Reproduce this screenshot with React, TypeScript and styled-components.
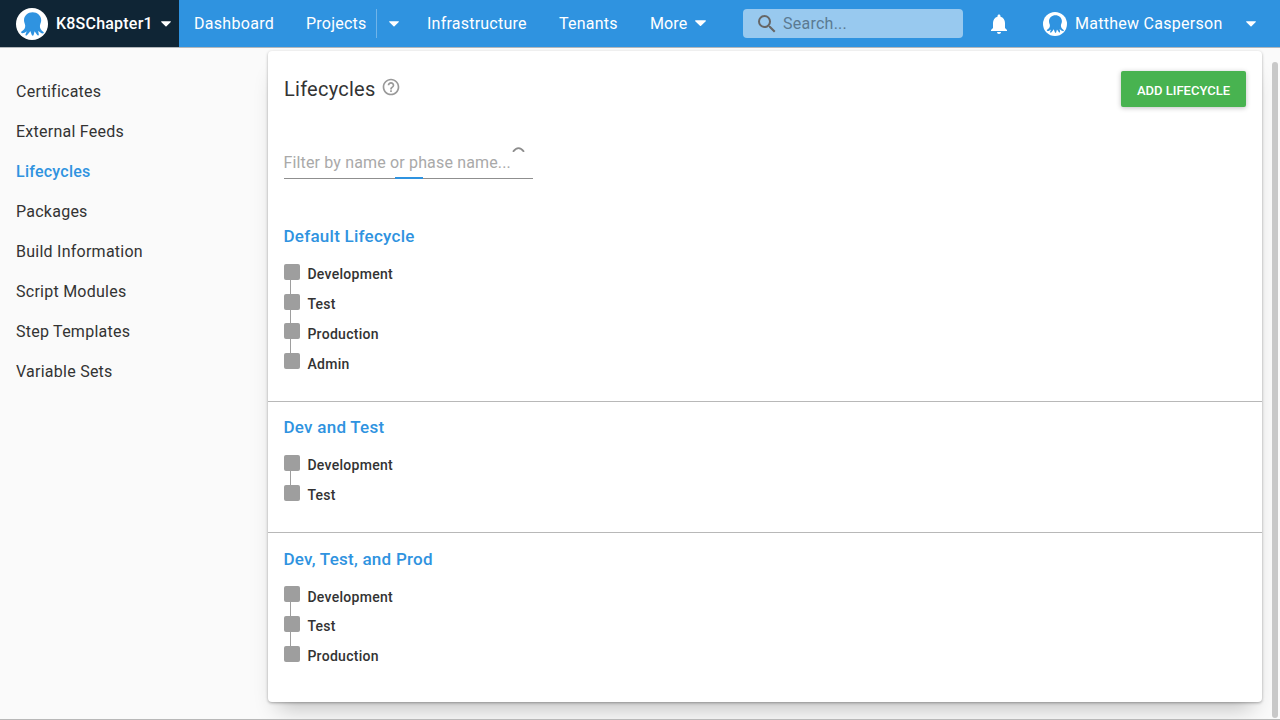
import React from "react";
import styled, { createGlobalStyle } from "styled-components";
import { MdNotifications, MdSearch, MdHelpOutline } from "react-icons/md";

const Global = createGlobalStyle`
  * { box-sizing: border-box; }
  html, body { margin: 0; height: 100%; overflow: hidden; }
  body {
    font-family: Roboto, "Liberation Sans", sans-serif;
    font-size: 16px;
    letter-spacing: 0.25px;
    color: #333;
    background: #fafafa;
  }
`;

const Page = styled.div`
  width: 1280px;
  height: 720px;
  display: flex;
  flex-direction: column;
  overflow: hidden;
  background: #fafafa;
  border-bottom: 1px solid #b8b8b8;
`;

const Header = styled.header`
  display: flex;
  flex: none;
  height: 48px;
  background: #2f93e0;
  border-bottom: 1px solid #b3b7bb;
  color: #fff;
  white-space: nowrap;
`;

const Space = styled.div`
  display: flex;
  align-items: center;
  width: 179px;
  padding-left: 16px;
  background: #0f2535;
  font-weight: 500;
`;

const SpaceName = styled.span`
  width: 96px;
  margin: 0 9px 0 8px;
  letter-spacing: 0.21px;
`;

const Nav = styled.nav`
  display: flex;
  align-items: center;
  width: 564px;
  padding-left: 15px;
`;

const NavItem = styled.a<{ $w: number; $ls?: number }>`
  width: ${(p) => p.$w}px;
  letter-spacing: ${(p) => p.$ls ?? 0.23}px;
`;

const Split = styled.span`
  display: flex;
  align-items: center;
  width: 51px;
  height: 29px;
  padding-left: 12px;
  border-left: 1px solid #70b4e9;
`;

const SearchBox = styled.div`
  display: flex;
  align-items: center;
  align-self: center;
  width: 220px;
  height: 29px;
  padding-left: 12px;
  border-radius: 4px;
  background: #98c9ef;
  color: #5b7a92;

  svg { color: #666; margin-right: 4px; }
`;

const Bell = styled.div`
  display: flex;
  align-items: center;
  margin-left: 24px;
  width: 56px;
`;

const User = styled.div`
  display: flex;
  align-items: center;
`;

const UserName = styled.span`
  width: 171px;
  margin-left: 8px;
  letter-spacing: 0.27px;
`;

const Body = styled.div`
  display: flex;
  flex: 1;
  min-height: 0;
`;

const Side = styled.aside`
  width: 268px;
  padding: 24px 16px 0;
`;

const SideItem = styled.a<{ $active?: boolean }>`
  display: block;
  line-height: 40px;
  font-weight: ${(p) => (p.$active ? 500 : 400)};
  color: ${(p) => (p.$active ? "#2f93e0" : "#333")};
`;

const Card = styled.main`
  width: 994px;
  height: 651px;
  margin-top: 3px;
  border-radius: 4px;
  background: #fff;
  box-shadow: 0 1px 3px rgba(0, 0, 0, 0.32), 0 16px 22px -10px rgba(0, 0, 0, 0.24);
`;

const CardHead = styled.div`
  display: flex;
  justify-content: space-between;
  align-items: center;
  height: 76px;
  padding: 0 16px;
`;

const Title = styled.h1`
  display: flex;
  align-items: center;
  margin: 0;
  font-size: 20px;
  font-weight: 400;
  letter-spacing: 0.25px;

  svg { color: #999; margin: -4px 0 0 5px; }
`;

const AddButton = styled.button`
  width: 125px;
  height: 36px;
  padding: 2px 0 0;
  border: 0;
  border-radius: 2px;
  background: #48b350;
  color: #fff;
  font: 500 13px Roboto, sans-serif;
  box-shadow: 0 1px 5px rgba(0, 0, 0, 0.25);
`;

const Filter = styled.div`
  display: flex;
  justify-content: space-between;
  width: 249px;
  height: 32px;
  margin: 20px 0 0 16px;
  border-bottom: 1px solid #8f8f8f;
  position: relative;
  color: #a9a9a9;
  letter-spacing: 0.155px;
  line-height: 31px;
  white-space: nowrap;

  svg { flex: none; margin-right: 8px; }
`;

const Placeholder = styled.span`
  margin-left: -0.5px;
`;

const FocusBar = styled.span`
  position: absolute;
  left: 111px;
  bottom: -1px;
  width: 28px;
  height: 2px;
  background: #2f93e0;
`;

const List = styled.div`
  margin-top: 32px;
`;

const Section = styled.section<{ $h: number }>`
  height: ${(p) => p.$h}px;
  padding: 13px 16px 0;
  border-bottom: 1px solid #b8b8b8;

  &:last-child { border-bottom: 0; }
`;

const SectionTitle = styled.h2`
  margin: 0 0 15.6px -0.5px;
  padding-top: 0.4px;
  font-size: 17px;
  line-height: 24px;
  font-weight: 500;
  color: #2f93e0;
`;

const Phase = styled.div`
  display: flex;
  height: 29.74px;
`;

const PhaseName = styled.span`
  padding-top: 0.4px;
  font-size: 14px;
  font-weight: 500;
  line-height: 20px;
  letter-spacing: 0.29px;
`;

const Track = styled.div`
  display: flex;
  flex-direction: column;
  width: 16px;
  margin-right: 7.4px;
`;

const Square = styled.span`
  width: 16px;
  height: 16px;
  border-radius: 2px;
  background: #9e9e9e;
`;

const Link = styled.span`
  flex: 1;
  width: 1px;
  margin-left: 6px;
  background: #9e9e9e;
`;

const Scroll = styled.div`
  width: 6px;
  height: 656px;
  margin: 14px 0 0 10px;
  border-radius: 3px;
  background: #c8c8c8;
`;

const Octopus = ({ size }: { size: number }) => (
  <svg width={size} height={size} viewBox="0 0 32 32">
    <circle cx="16" cy="16" r="16" fill="#fff" />
    <path
      fill="#2f93e0"
      d="M16.600 4.200C11.900 4.200 8 7.700 8 12.200c0 2.200 1 3.600 1.200 5.300.3 2.500-1.200 4.600-3.700 6-.8.5-.3 1.600.6 1.700 1.700.1 3.300-.9 4.600-2l-1.200 3.200c-.3.9.7 1.500 1.400.8 1.300-1 2.400-2.600 3.400-4.200l1.500 4c.4 1 1.500.9 1.800 0l1-3.700 2.600 3.700c.7.8 1.700.4 1.600-.6l-.6-3.600c1.400 1.300 2.900 2.700 4.600 2.700.9 0 1.400-1 .7-1.500-2.300-1.700-3.700-3.500-3.600-6 .1-1.900 1.300-3.400 1.300-5.800 0-4.500-3.900-8-8.600-8z"
    />
  </svg>
);

const Caret = ({ w = 10 }: { w?: number }) => (
  <svg width={w} height={w * 0.6} viewBox="0 0 10 6">
    <path fill="#fff" d="M.6.3h8.800c.5 0 .7.5.4.8L5.500 5.300a.7.7 0 0 1-1 0L.2 1.100C-.1.8.1.300.6.300z" />
  </svg>
);

const sideItems = ["Certificates", "External Feeds", "Lifecycles", "Packages", "Build Information", "Script Modules", "Step Templates", "Variable Sets"];

const lifecycles = [
  { name: "Default Lifecycle", height: 191, phases: ["Development", "Test", "Production", "Admin"] },
  { name: "Dev and Test", height: 131.3, phases: ["Development", "Test"] },
  { name: "Dev, Test, and Prod", height: 168, phases: ["Development", "Test", "Production"] },
];

export default function App() {
  return (
    <Page>
      <Global />
      <Header>
        <Space>
          <Octopus size={32} />
          <SpaceName>K8SChapter1</SpaceName>
          <Caret />
        </Space>
        <Nav>
          <NavItem $w={112} $ls={0.3}>Dashboard</NavItem>
          <NavItem $w={70}>Projects</NavItem>
          <Split><Caret /></Split>
          <NavItem $w={132}>Infrastructure</NavItem>
          <NavItem $w={91}>Tenants</NavItem>
          <NavItem $w={45} $ls={0.1}>More</NavItem>
          <Caret w={11} />
        </Nav>
        <SearchBox>
          <MdSearch size={24} />
          Search...
        </SearchBox>
        <Bell><MdNotifications size={24} /></Bell>
        <User>
          <Octopus size={24} />
          <UserName>Matthew Casperson</UserName>
          <Caret />
        </User>
      </Header>
      <Body>
        <Side>
          {sideItems.map((s) => (
            <SideItem key={s} $active={s === "Lifecycles"}>{s}</SideItem>
          ))}
        </Side>
        <Card>
          <CardHead>
            <Title>Lifecycles<MdHelpOutline size={20} /></Title>
            <AddButton>ADD LIFECYCLE</AddButton>
          </CardHead>
          <Filter>
            <Placeholder>Filter by name or phase name...</Placeholder>
            <svg width="13" height="5" viewBox="0 0 13 5">
              <path d="M1 4.800Q6.500-2.400 12 4.800" fill="none" stroke="#8c8c8c" strokeWidth="1.800" />
            </svg>
            <FocusBar />
          </Filter>
          <List>
            {lifecycles.map((l) => (
              <Section key={l.name} $h={l.height}>
                <SectionTitle>{l.name}</SectionTitle>
                {l.phases.map((p, i) => (
                  <Phase key={p}>
                    <Track>
                      <Square />
                      {i < l.phases.length - 1 && <Link />}
                    </Track>
                    <PhaseName>{p}</PhaseName>
                  </Phase>
                ))}
              </Section>
            ))}
          </List>
        </Card>
        <Scroll />
      </Body>
    </Page>
  );
}
